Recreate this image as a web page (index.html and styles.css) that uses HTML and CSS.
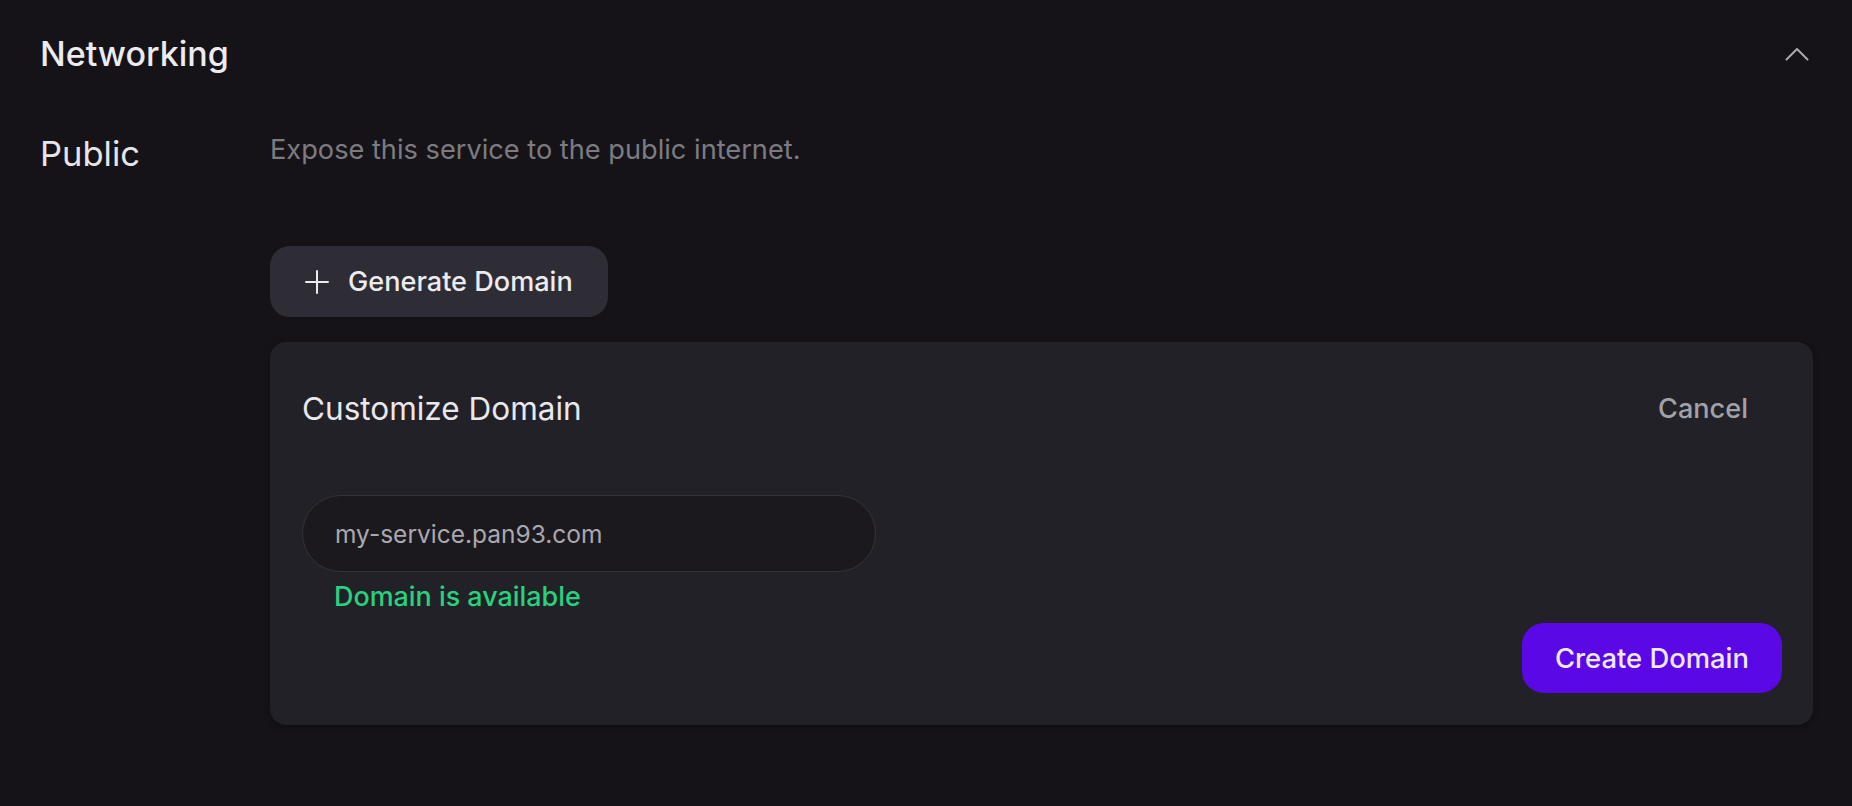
FILE: index.html
```html
<!DOCTYPE html>
<html lang="en">
<head>
<meta charset="utf-8">
<title>Networking</title>
<link rel="stylesheet" href="styles.css">
</head>
<body>
<main class="page">
  <header class="section-header">
    <h2 class="section-title">Networking</h2>
    <button class="collapse-btn" aria-label="Collapse">
      <svg width="32" height="20" viewBox="0 0 32 20" fill="none" stroke="currentColor" stroke-width="2" stroke-linecap="round" stroke-linejoin="round"><path d="M5.5 15.5 L16 5 L26.5 15.5"/></svg>
    </button>
  </header>

  <section class="row">
    <div class="row-label">Public</div>
    <div class="row-body">
      <p class="row-desc">Expose this service to the public internet.</p>

      <button class="btn-secondary">
        <svg class="plus" width="24" height="24" viewBox="0 0 24 24" fill="none" stroke="currentColor" stroke-width="2" stroke-linecap="round"><path d="M12 1 V23 M1 12 H23"/></svg>
        <span>Generate Domain</span>
      </button>

      <div class="card">
        <div class="card-header">
          <h3 class="card-title">Customize Domain</h3>
          <button class="btn-ghost">Cancel</button>
        </div>
        <div class="input-wrap">
          <input class="domain-input" type="text" value="my-service.pan93.com">
        </div>
        <div class="status-ok">Domain is available</div>
        <div class="card-actions">
          <button class="btn-primary">Create Domain</button>
        </div>
      </div>
    </div>
  </section>
</main>
</body>
</html>
```
FILE: styles.css
```css
* { box-sizing: border-box; }

html, body {
  margin: 0;
  padding: 0;
  background: #151318;
  height: 100%;
}

body {
  font-family: "Inter", "Noto Sans", sans-serif;
  color: #e9e8ed;
}

.page {
  padding: 34px 39px 0 40px;
}

.section-header {
  display: flex;
  align-items: center;
  justify-content: space-between;
  height: 40px;
}

.section-title {
  margin: 0;
  font-size: 34px;
  line-height: 40px;
  font-weight: 500;
  color: #ecebef;
}

.collapse-btn {
  background: none;
  border: 0;
  padding: 0;
  margin: 0;
  width: 32px;
  height: 20px;
  color: #a9a8ae;
  display: flex;
  cursor: pointer;
}

.row {
  display: flex;
  margin-top: 60px;
}

.row-label {
  width: 230px;
  flex: none;
  font-size: 34.5px;
  line-height: 40px;
  font-weight: 400;
  color: #e6e5ea;
}

.row-body {
  flex: 1;
  display: flex;
  flex-direction: column;
  align-items: flex-start;
}

.row-desc {
  margin: 0;
  font-size: 27.2px;
  line-height: 32px;
  color: #7c7b82;
}

.btn-secondary {
  margin-top: 80px;
  height: 71px;
  display: flex;
  align-items: center;
  gap: 19px;
  padding: 0 35px 0 35px;
  background: #2e2d35;
  border: 0;
  border-radius: 20px;
  color: #ecebef;
  font-family: inherit;
  font-size: 27.1px;
  font-weight: 500;
  cursor: pointer;
}

.plus {
  width: 24px;
  height: 24px;
  flex: none;
}

.card {
  align-self: stretch;
  margin-top: 25px;
  background: #222127;
  border-radius: 16px;
  padding: 32px 31px 32px 32px;
  box-shadow: 0 2px 6px rgba(0, 0, 0, 0.35);
}

.card-header {
  display: flex;
  align-items: center;
  justify-content: space-between;
  height: 69px;
}

.card-title {
  margin: 0;
  font-size: 31.5px;
  line-height: 37px;
  font-weight: 400;
  color: #e9e8ed;
}

.btn-ghost {
  height: 69px;
  padding: 0 34px;
  background: none;
  border: 0;
  border-radius: 18px;
  color: #a2a1a7;
  font-family: inherit;
  font-size: 27.1px;
  font-weight: 500;
  cursor: pointer;
}

.input-wrap {
  margin-top: 52px;
}

.domain-input {
  display: block;
  width: 574px;
  height: 77px;
  padding: 0 32px;
  background: #1b191e;
  border: 1px solid #34323a;
  border-radius: 39px;
  color: #a9a8ae;
  font-family: inherit;
  font-size: 24.5px;
  font-weight: 400;
  outline: none;
}

.status-ok {
  margin: 8px 0 0 32px;
  font-size: 26.9px;
  line-height: 32px;
  font-weight: 500;
  color: #28d17e;
}

.card-actions {
  margin-top: 11px;
  display: flex;
  justify-content: flex-end;
}

.btn-primary {
  height: 70px;
  padding: 0 33px;
  background: #5a08e6;
  border: 0;
  border-radius: 22px;
  color: #efe9ff;
  font-family: inherit;
  font-size: 27.4px;
  font-weight: 500;
  cursor: pointer;
}
```
